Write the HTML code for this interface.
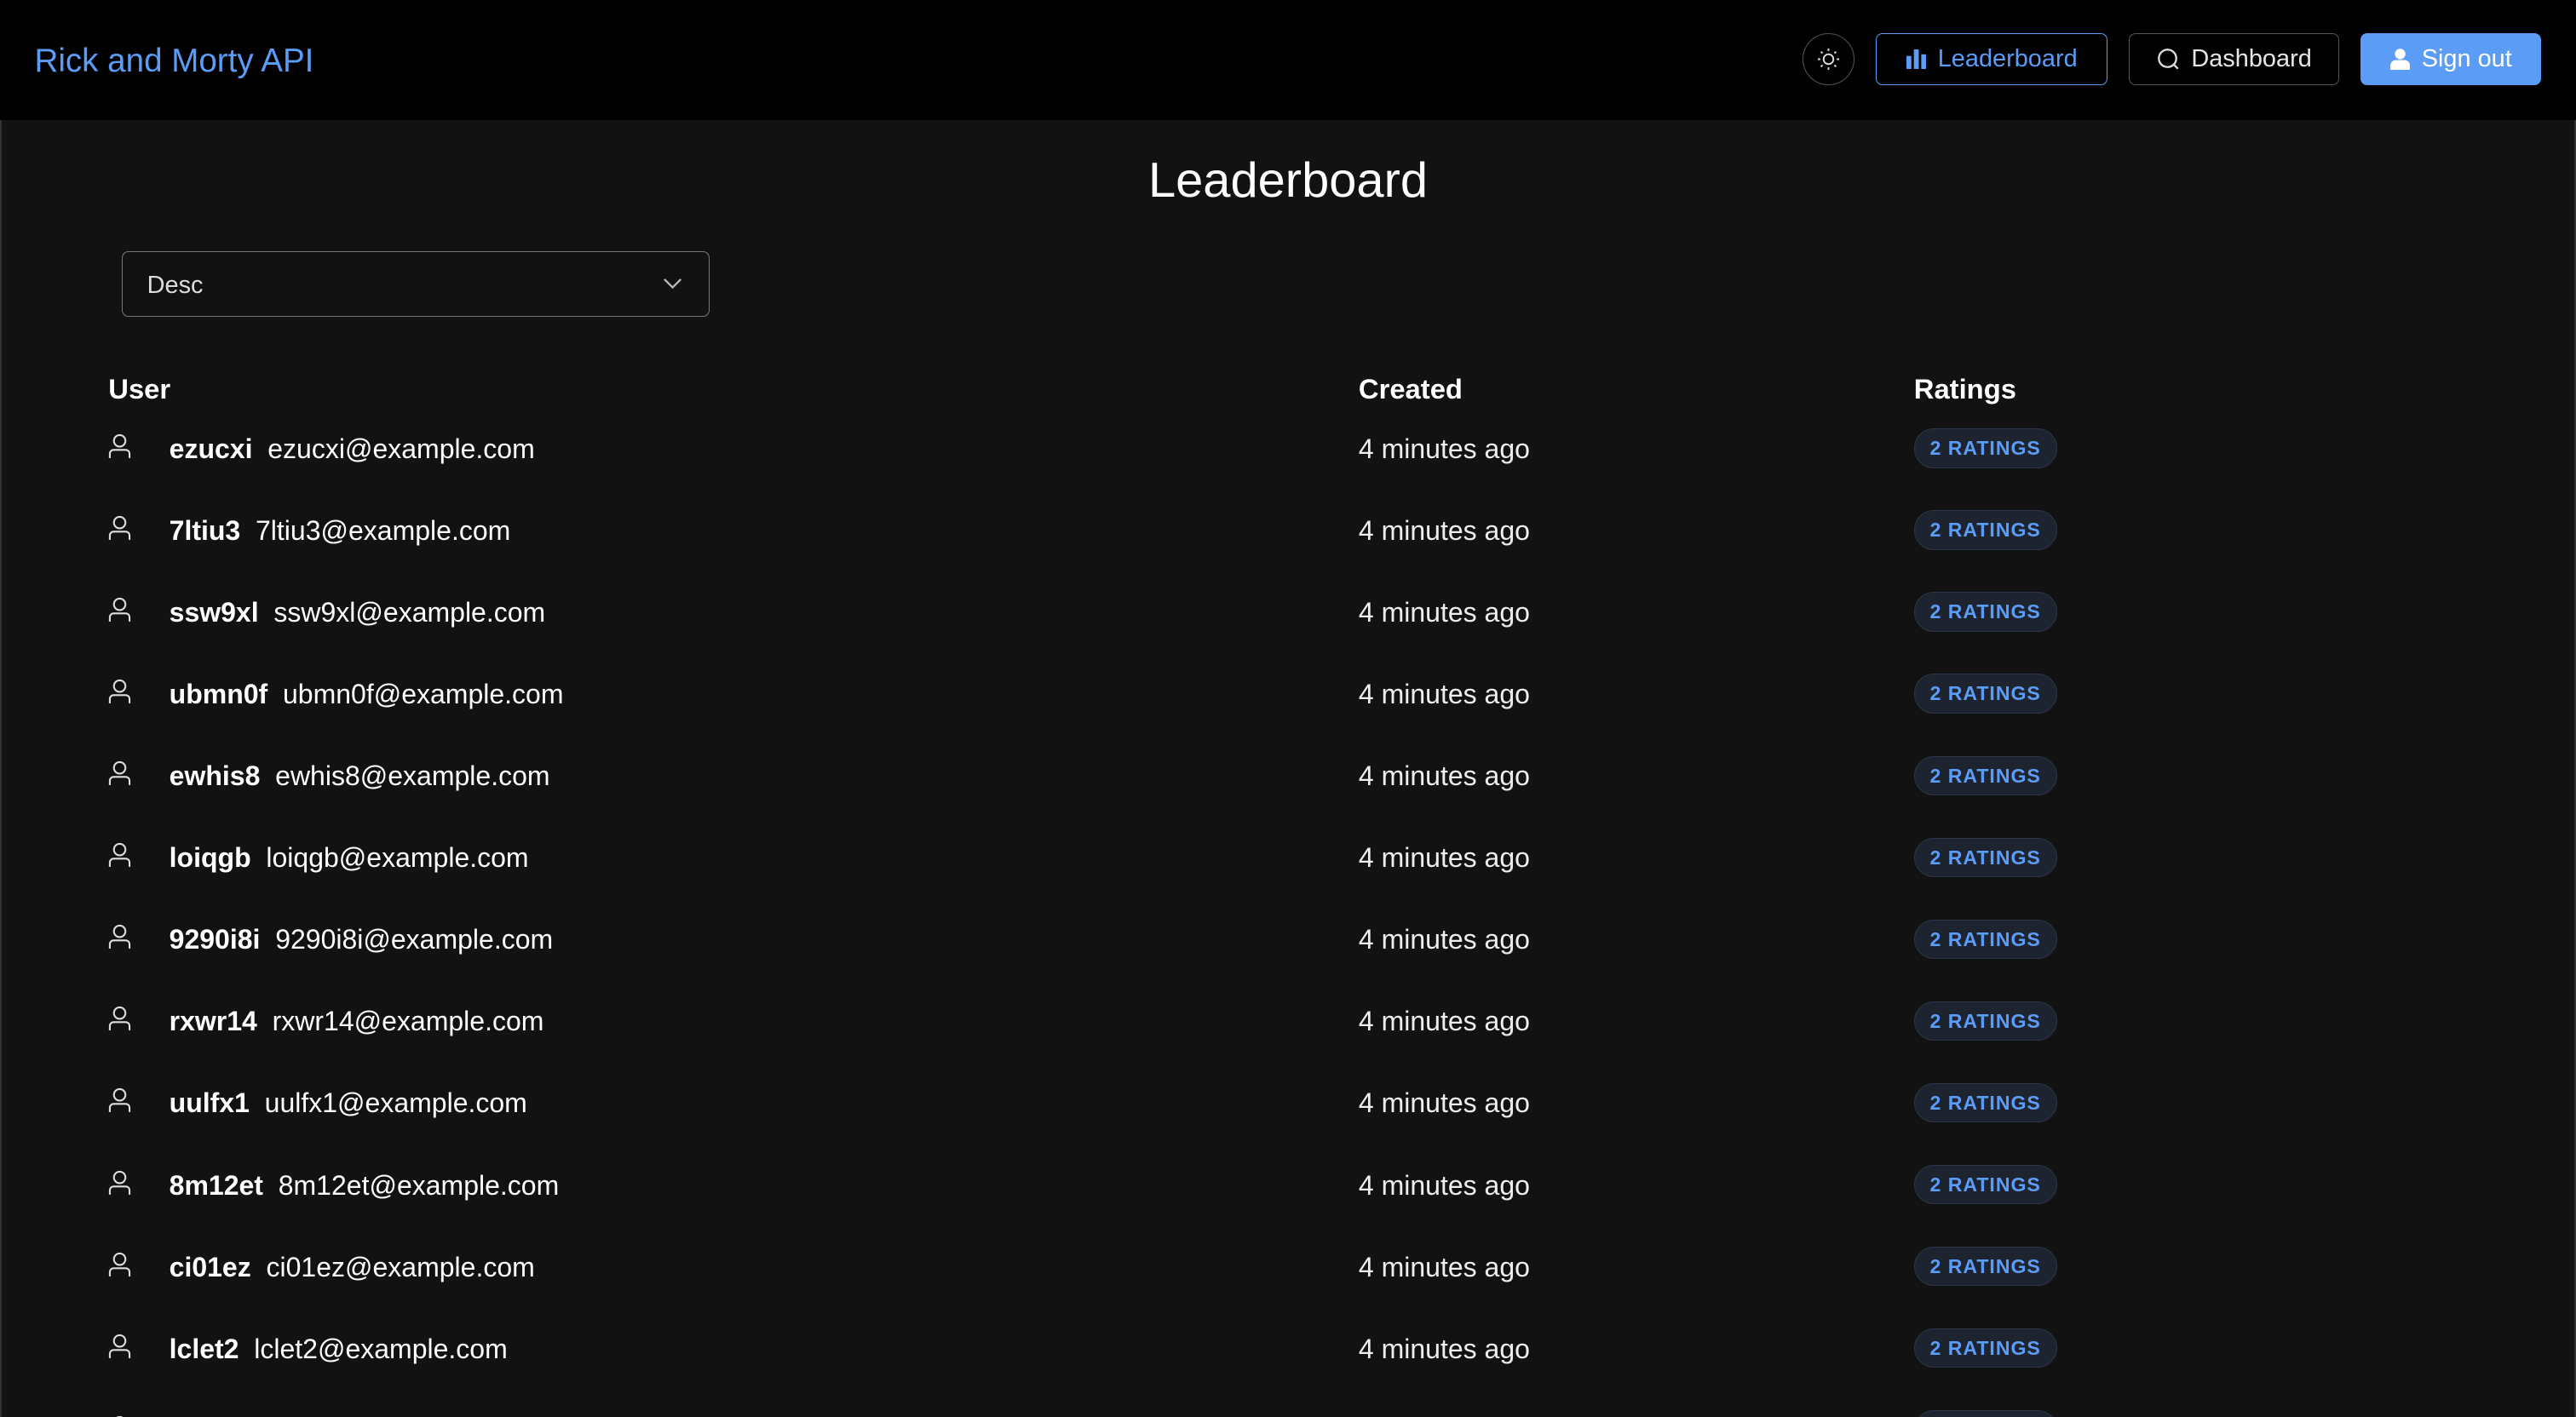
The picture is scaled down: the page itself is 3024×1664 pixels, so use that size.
<!DOCTYPE html>
<html><head><meta charset="utf-8"><style>
html,body{margin:0;padding:0;background:#121212;overflow:hidden}
#w{width:1568px;height:863px;zoom:1.928571;position:relative;font-family:"Liberation Sans",sans-serif;color:#fff;background:#121212;overflow:hidden;box-shadow:inset 1px 0 0 #333,inset -1px 0 0 #333}
nav{position:absolute;left:0;top:0;width:1568px;height:73px;background:#000}
.logo{position:absolute;left:21px;top:26px;font-size:20px;color:#5b9cf6}
.btn{position:absolute;top:20px;height:32px;box-sizing:border-box;border-radius:4px;font-size:15px;display:flex;align-items:center;justify-content:center;gap:7px}
h1{position:absolute;left:0;width:1568px;text-align:center;top:93px;margin:0;font-weight:normal;font-size:30px}
.sel{position:absolute;left:74px;top:153px;width:358px;height:40px;box-sizing:border-box;border:1px solid #777;border-radius:4px;font-size:15px;padding:12px 15px;color:#ddd}
.th{position:absolute;top:227px;font-weight:bold;font-size:17px}
.row{position:absolute;left:0;width:1568px;height:24px;font-size:16.6px}
.row svg{position:absolute;left:66px;top:3px}
.nm{position:absolute;left:103px;top:3px;white-space:nowrap}
.cr{position:absolute;left:827px;top:3px;color:#eee}
.bd{position:absolute;left:1165px;top:0;width:87px;height:24px;box-sizing:border-box;border:1px solid #2a3546;background:#1d2430;border-radius:12px;color:#5b9cf6;font-size:12px;font-weight:bold;letter-spacing:.5px;text-align:center;line-height:23px}
</style></head><body><div id="w">
<nav>
<div class="logo">Rick and Morty API</div>
<div class="btn" style="left:1097px;width:32px;border:1px solid #555;border-radius:16px"><svg width="14" height="14" viewBox="0 0 14 14" stroke="#ddd" fill="none" stroke-width="1"><circle cx="7" cy="7" r="3"/><path d="M7 0.5v1.5M7 12v1.5M0.5 7h1.5M12 7h1.5M2.4 2.4l1 1M10.6 10.6l1 1M2.4 11.6l1-1M10.6 3.4l1-1"/></svg></div>
<div class="btn" style="left:1142px;width:141px;border:1px solid #5b9cf6;color:#5b9cf6"><svg width="12" height="12" viewBox="0 0 12 12" fill="#5b9cf6"><rect x="0" y="4" width="3" height="8"/><rect x="4.5" y="0" width="3" height="12"/><rect x="9" y="3" width="3" height="9"/></svg>Leaderboard</div>
<div class="btn" style="left:1296px;width:128px;border:1px solid #555;color:#e6e6e6"><svg width="14" height="14" viewBox="0 0 14 14" fill="none" stroke="#ddd" stroke-width="1.2"><circle cx="6.5" cy="6.5" r="5.3"/><path d="M10.3 10.3l2.5 2.5"/></svg>Dashboard</div>
<div class="btn" style="left:1437px;width:110px;background:#5b9cf6;color:#fff"><svg width="12" height="13" viewBox="0 0 12 13" fill="#fff"><circle cx="6" cy="3.3" r="3.2"/><path d="M0 13v-2.5c0-2 1.5-3.5 3.5-3.5h5c2 0 3.5 1.5 3.5 3.5V13z"/></svg>Sign out</div>
</nav>
<h1>Leaderboard</h1>
<div class="sel">Desc<svg style="position:absolute;right:16px;top:15px" width="12" height="8" viewBox="0 0 12 8" fill="none" stroke="#bbb" stroke-width="1.2"><path d="M1 1.5l5 5 5-5"/></svg></div>
<div class="th" style="left:66px">User</div>
<div class="th" style="left:827px">Created</div>
<div class="th" style="left:1165px">Ratings</div>
<div id="rows"></div>
<script>
var d=[["ezucxi"],["7ltiu3"],["ssw9xl"],["ubmn0f"],["ewhis8"],["loiqgb"],["9290i8i"],["rxwr14"],["uulfx1"],["8m12et"],["ci01ez"],["lclet2"],["xxxxxx"]];
var h="";d.forEach(function(r,i){var t=261+i*49.8;h+='<div class="row" style="top:'+t+'px"><svg width="14" height="16" viewBox="0 0 14 16" fill="none" stroke="#ddd" stroke-width="1.1"><circle cx="7" cy="4.5" r="3.5"/><path d="M1 15v-2.5c0-1.5 1-2.5 2.5-2.5h7c1.5 0 2.5 1 2.5 2.5V15"/></svg><span class="nm"><b>'+r[0]+'</b>&nbsp; '+r[0]+'@example.com</span><span class="cr">4 minutes ago</span><span class="bd">2 RATINGS</span></div>';});
document.getElementById("rows").innerHTML=h;
</script>
</div></body></html>
